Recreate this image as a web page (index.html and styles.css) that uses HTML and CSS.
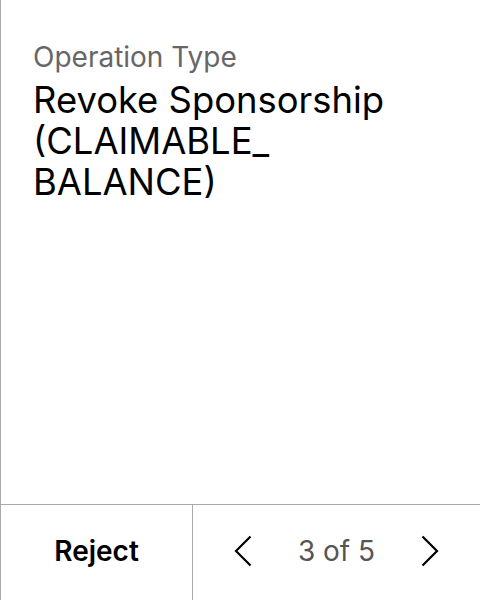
FILE: index.html
```html
<!DOCTYPE html>
<html>
<head>
<meta charset="utf-8">
<link rel="stylesheet" href="styles.css">
</head>
<body>
<div class="screen">
  <div class="content">
    <div class="label">Operation Type</div>
    <div class="value">Revoke Sponsorship (CLAIMABLE_ BALANCE)</div>
  </div>
  <div class="footer">
    <button class="reject">Reject</button>
    <div class="pager">
      <svg class="chev" width="20" height="32" viewBox="0 0 20 32"><path d="M17.5 1.5 L3 16 L17.5 30.5" fill="none" stroke="#000" stroke-width="2.2"/></svg>
      <span class="count">3 of 5</span>
      <svg class="chev" width="20" height="32" viewBox="0 0 20 32"><path d="M2.5 1.5 L17 16 L2.5 30.5" fill="none" stroke="#000" stroke-width="2.2"/></svg>
    </div>
  </div>
</div>
</body>
</html>
```
FILE: styles.css
```css
html, body {
  margin: 0;
  padding: 0;
  background: #fff;
}
body {
  font-family: Inter, "Noto Sans", sans-serif;
}
.screen {
  width: 479px;
  height: 600px;
  border-left: 1px solid #aaa;
  display: flex;
  flex-direction: column;
}
.content {
  flex: 1;
  padding: 40px 30px 0 32px;
}
.label {
  font-size: 28px;
  color: #666;
  line-height: 34px;
}
.value {
  margin-top: 6px;
  font-size: 36.4px;
  color: #000;
  line-height: 41px;
}
.footer {
  height: 95px;
  border-top: 1px solid #aaa;
  display: flex;
}
.reject {
  width: 192px;
  border: 0;
  border-right: 1px solid #aaa;
  background: #fff;
  font-family: inherit;
  font-size: 28px;
  font-weight: 600;
  color: #000;
  padding: 0 0 3px 0;
}
.pager {
  flex: 1;
  display: flex;
  align-items: center;
  justify-content: space-between;
  padding: 0 40px 3px 40px;
}
.count {
  font-size: 28px;
  color: #555;
}
.chev {
  display: block;
}
```
